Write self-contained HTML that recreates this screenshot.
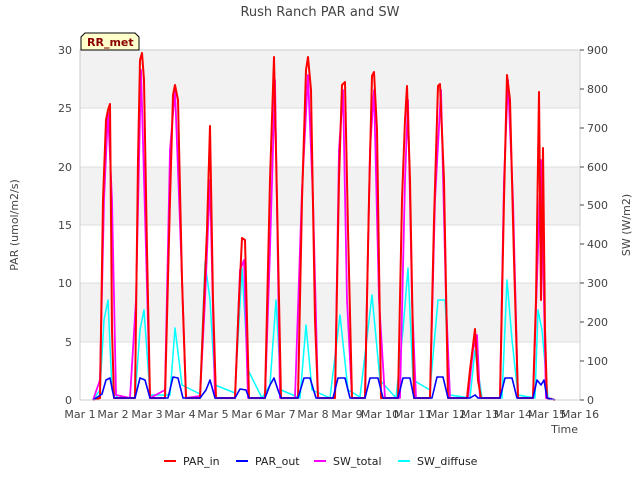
<!DOCTYPE html>
<html><head><style>
body{margin:0;background:#fff;font-family:"Liberation Sans","DejaVu Sans",sans-serif;}
svg text{font-family:"DejaVu Sans","Liberation Sans",sans-serif;}
</style></head><body>
<svg width="640" height="480" xmlns="http://www.w3.org/2000/svg">
<rect width="640" height="480" fill="#fff"/>
<text x="320" y="16" font-size="13" fill="#444" text-anchor="middle">Rush Ranch PAR and SW</text>
<rect x="80" y="50" width="500" height="350" fill="#fff"/>
<rect x="80" y="50" width="500" height="58" fill="#f2f2f2"/>
<rect x="80" y="167" width="500" height="58" fill="#f2f2f2"/>
<rect x="80" y="283" width="500" height="59" fill="#f2f2f2"/>
<g stroke="#ddd" stroke-width="1">
<line x1="80" y1="50" x2="580" y2="50"/><line x1="80" y1="108" x2="580" y2="108"/>
<line x1="80" y1="167" x2="580" y2="167"/><line x1="80" y1="225" x2="580" y2="225"/>
<line x1="80" y1="283" x2="580" y2="283"/><line x1="80" y1="342" x2="580" y2="342"/>
</g>
<g fill="none" stroke-linejoin="round">
<path stroke="#00ffff" stroke-width="1.5" d="M93 400 L100 390 L104 320 L108 300 L112 390 L118 398 L135 398 L140 330 L144 310 L150 395 L170 395 L175 328 L182 385 L200 394 L205 262 L210 300 L215 385 L235 393 L242 268 L248 370 L262 398 L270 385 L276 300 L281 390 L300 398 L306 325 L312 390 L330 398 L340 315 L348 390 L360 397 L372 295 L380 380 L396 398 L403 330 L408 268 L413 380 L430 390 L438 300 L445 300 L450 395 L470 398 L475 350 L482 398 L502 398 L507 280 L512 340 L518 395 L535 398 L538 310 L542 330 L548 398 L555 400"/>
<path stroke="#ff00ff" stroke-width="1.8" d="M93 400 L100 380 L104 200 L108 112 L112 200 L116 395 L130 398 L136 300 L141 70 L146 250 L150 398 L165 390 L170 150 L175 90 L181 250 L186 398 L200 396 L205 300 L210 180 L215 398 L235 398 L240 270 L244 260 L248 398 L265 398 L270 250 L275 80 L280 398 L295 398 L302 190 L308 75 L313 200 L318 398 L335 398 L339 150 L343 90 L347 300 L352 398 L365 398 L370 150 L374 90 L379 300 L385 398 L400 398 L405 180 L408 100 L412 300 L416 398 L430 398 L435 200 L441 90 L446 300 L450 398 L468 398 L473 350 L477 335 L480 398 L500 398 L504 180 L508 80 L513 200 L518 398 L533 398 L538 250 L541 160 L546 398 L555 400"/>
<path stroke="#ff0000" stroke-width="2" d="M93 400 L100 398 L103 200 L106 120 L108 110 L110 104 L112 330 L114 398 L135 398 L138 160 L140 60 L142 53 L144 80 L147 250 L150 398 L165 398 L170 200 L173 95 L175 85 L178 100 L182 280 L186 398 L200 398 L203 325 L207 230 L210 126 L213 300 L216 398 L235 398 L239 300 L242 238 L245 240 L249 398 L265 398 L270 180 L274 57 L277 200 L281 398 L298 398 L302 200 L306 70 L308 57 L311 90 L315 320 L318 398 L335 398 L339 180 L342 85 L345 82 L348 230 L352 398 L365 398 L369 200 L372 76 L374 72 L377 130 L381 398 L398 398 L402 200 L405 120 L407 86 L410 180 L414 398 L430 398 L434 220 L438 86 L440 84 L444 180 L448 398 L467 398 L470 370 L475 329 L478 380 L481 398 L500 398 L504 200 L507 75 L510 100 L514 260 L518 398 L533 398 L536 300 L539 92 L541 300 L543 148 L545 330 L547 398 L555 400"/>
<path stroke="#0000ff" stroke-width="1.6" d="M93 400 L102 394 L106 380 L110 378 L114 398 L135 398 L140 378 L145 380 L150 398 L168 398 L173 377 L178 378 L183 398 L200 398 L206 390 L210 380 L215 398 L235 398 L240 389 L246 390 L249 398 L265 398 L270 385 L274 378 L278 390 L281 398 L298 398 L304 378 L310 378 L316 398 L333 398 L338 378 L345 378 L350 398 L365 398 L370 378 L378 378 L383 398 L398 398 L403 378 L410 378 L414 398 L432 398 L437 377 L443 377 L448 398 L470 398 L475 395 L478 398 L500 398 L505 378 L512 378 L517 398 L533 398 L537 380 L541 385 L544 380 L547 398 L555 400"/>
</g>
<rect x="80" y="50" width="500" height="350" fill="none" stroke="#ccc"/>
<g font-size="11" fill="#444">
<g text-anchor="end">
<text x="72" y="404">0</text><text x="72" y="346">5</text><text x="72" y="287">10</text><text x="72" y="229">15</text><text x="72" y="171">20</text><text x="72" y="112">25</text><text x="72" y="54">30</text>
</g>
<g text-anchor="start">
<text x="587" y="404">0</text><text x="587" y="365">100</text><text x="587" y="326">200</text><text x="587" y="287">300</text><text x="587" y="248">400</text><text x="587" y="209">500</text><text x="587" y="171">600</text><text x="587" y="132">700</text><text x="587" y="93">800</text><text x="587" y="54">900</text>
</g>
<g stroke="#444">
<line x1="580" y1="400" x2="584" y2="400"/><line x1="580" y1="361" x2="584" y2="361"/><line x1="580" y1="322" x2="584" y2="322"/><line x1="580" y1="283" x2="584" y2="283"/><line x1="580" y1="244" x2="584" y2="244"/><line x1="580" y1="205" x2="584" y2="205"/><line x1="580" y1="167" x2="584" y2="167"/><line x1="580" y1="128" x2="584" y2="128"/><line x1="580" y1="89" x2="584" y2="89"/><line x1="580" y1="50" x2="584" y2="50"/>
</g>
<g text-anchor="middle">
<text x="80" y="418">Mar 1</text><text x="113" y="418">Mar 2</text><text x="147" y="418">Mar 3</text><text x="180" y="418">Mar 4</text><text x="213" y="418">Mar 5</text><text x="247" y="418">Mar 6</text><text x="280" y="418">Mar 7</text><text x="313" y="418">Mar 8</text><text x="347" y="418">Mar 9</text><text x="380" y="418">Mar 10</text><text x="413" y="418">Mar 11</text><text x="447" y="418">Mar 12</text><text x="480" y="418">Mar 13</text><text x="513" y="418">Mar 14</text><text x="547" y="418">Mar 15</text><text x="580" y="418">Mar 16</text>
</g>
<text x="578" y="433" text-anchor="end">Time</text>
<text transform="translate(18,225) rotate(-90)" text-anchor="middle">PAR (umol/m2/s)</text>
<text transform="translate(630,225) rotate(-90)" text-anchor="middle">SW (W/m2)</text>
</g>
<path d="M81 50 L81 37 L85 33 L135 33 L139 37 L139 50 Z" fill="#ffffcc" stroke="#000"/>
<text x="87" y="46" font-size="11" font-weight="bold" fill="#8b0000">RR_met</text>
<g font-size="11" fill="#222">
<line x1="164" y1="461" x2="176" y2="461" stroke="#ff0000" stroke-width="2"/><text x="183" y="465">PAR_in</text>
<line x1="236" y1="461" x2="248" y2="461" stroke="#0000ff" stroke-width="2"/><text x="255" y="465">PAR_out</text>
<line x1="314" y1="461" x2="326" y2="461" stroke="#ff00ff" stroke-width="2"/><text x="333" y="465">SW_total</text>
<line x1="398" y1="461" x2="410" y2="461" stroke="#00ffff" stroke-width="2"/><text x="417" y="465">SW_diffuse</text>
</g>
</svg>
</body></html>
